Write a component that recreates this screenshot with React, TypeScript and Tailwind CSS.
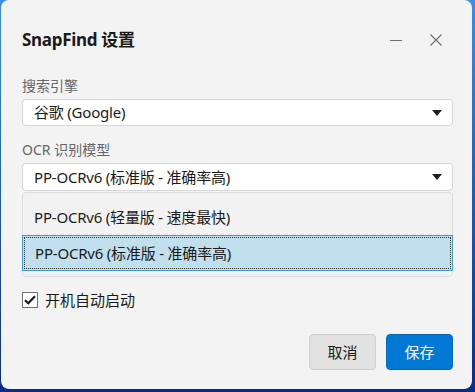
const font = { fontFamily: '"Noto Sans", "Noto Sans CJK SC", sans-serif' };

function Caret() {
  return (
    <svg width="10" height="6" viewBox="0 0 10 6" className="shrink-0">
      <path d="M0 0 H10 L5 6 Z" fill="#1f1f1f" />
    </svg>
  );
}

export default function App() {
  return (
    <div
      className="w-[475px] h-[392px] bg-gradient-to-b from-[#3a8fe6] to-[#0b2c86] pl-[1px] pr-[3px] pb-[3px]"
      style={font}
    >
      <div className="h-full rounded-lg bg-[#f3f3f3] pl-[21px] pr-[19px] flex flex-col">
        {/* header */}
        <div className="h-[76px] pt-[29px] flex items-start">
          <div className="text-[17px] leading-[22px] font-bold text-[#1a1a1a] tracking-[-0.3px]">
            SnapFind 设置
          </div>
          <div className="ml-auto flex items-center h-[22px] gap-[28px] mr-[11px]">
            <svg width="12" height="12" viewBox="0 0 12 12">
              <path d="M0 6.5 H12" stroke="#6e6e6e" strokeWidth="1" />
            </svg>
            <svg width="12" height="12" viewBox="0 0 12 12">
              <path d="M0.5 0.5 L11.5 11.5 M11.5 0.5 L0.5 11.5" stroke="#6e6e6e" strokeWidth="1.1" />
            </svg>
          </div>
        </div>

        <div className="h-[20px] text-[14px] leading-[20px] text-[#666666]">搜索引擎</div>
        <div className="mt-[3px] h-[27px] rounded-[4px] border border-[#d6d6d6] bg-white flex items-center pl-[11px] pr-[10px]">
          <span className="text-[15px] text-[#1a1a1a] tracking-[-0.2px]">谷歌 (Google)</span>
          <span className="ml-auto"><Caret /></span>
        </div>

        <div className="mt-[14px] h-[20px] text-[14px] leading-[20px] text-[#666666]">OCR 识别模型</div>
        <div className="mt-[3px] h-[28px] rounded-[4px] border border-[#d6d6d6] bg-white flex items-center pl-[11px] pr-[10px]">
          <span className="text-[15px] text-[#1a1a1a] tracking-[-0.2px]">PP-OCRv6 (标准版 - 准确率高)</span>
          <span className="ml-auto"><Caret /></span>
        </div>

        {/* dropdown list */}
        <div className="mt-[1px] h-[85px] rounded-[4px] border border-[#dcdcdc] bg-[#f2f2f2] pt-[6px]">
          <div className="h-[36px] flex items-center pl-[11px] text-[15px] text-[#1a1a1a] tracking-[-0.2px]">
            PP-OCRv6 (轻量版 - 速度最快)
          </div>
          <div className="h-[36px] -ml-px w-[431px] border border-[#3a9de0] bg-[#c2dfee] p-[1px]">
            <div className="h-full border border-dotted border-[#333333] flex items-center pl-[10px] text-[15px] text-[#1a1a1a] tracking-[-0.2px]">
              PP-OCRv6 (标准版 - 准确率高)
            </div>
          </div>
        </div>

        {/* checkbox */}
        <div className="mt-[15px] flex items-center gap-[7px] h-[16px]">
          <span className="w-[16px] h-[16px] border border-[#707070] bg-white flex items-center justify-center">
            <svg width="12" height="10" viewBox="0 0 12 10">
              <path d="M1 5.2 L4.3 8.3 L11 1.2" stroke="#1a1a1a" strokeWidth="2.2" fill="none" />
            </svg>
          </span>
          <span className="text-[15px] text-[#1a1a1a]">开机自动启动</span>
        </div>

        {/* buttons */}
        <div className="mt-[26px] flex justify-end gap-[10px]">
          <button className="w-[67px] h-[36px] rounded-[4px] border border-[#cfcfcf] bg-[#e1e1e1] text-[15px] text-[#1a1a1a]">
            取消
          </button>
          <button className="w-[67px] h-[36px] rounded-[4px] border border-[#0a68b8] bg-[#0078d4] text-[15px] text-white">
            保存
          </button>
        </div>
      </div>
    </div>
  );
}
